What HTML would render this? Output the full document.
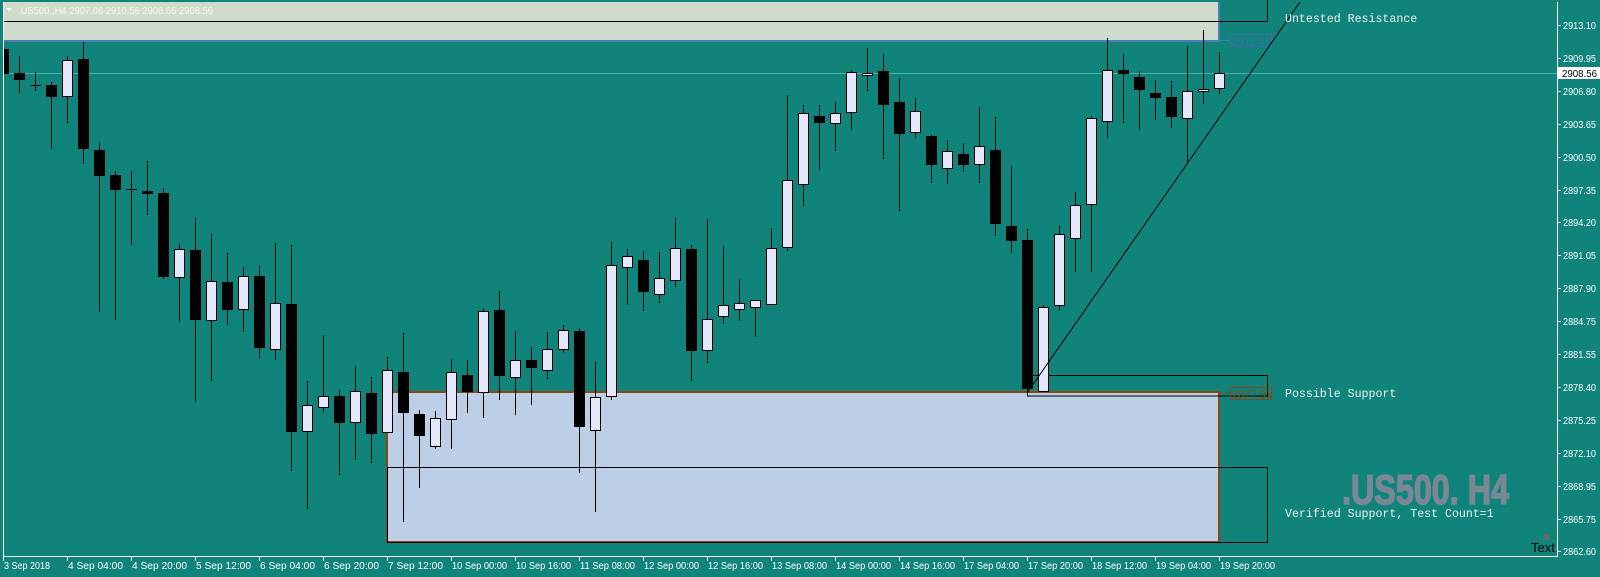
<!DOCTYPE html>
<html><head><meta charset="utf-8">
<style>
html,body{margin:0;padding:0;width:1600px;height:577px;overflow:hidden;background:#10837b;}
svg{position:absolute;left:0;top:0;}
.ax{font-family:"Liberation Sans","DejaVu Sans",sans-serif;font-size:10px;fill:#fff;}
.lbl{font-family:"Liberation Mono",monospace;font-size:11.6px;fill:#eef4ee;}
</style></head>
<body>
<svg id="s" width="1600" height="577" xmlns="http://www.w3.org/2000/svg" shape-rendering="crispEdges">
<defs><clipPath id="c"><rect x="3" y="2" width="1554" height="554"/></clipPath></defs>
<rect x="3" y="2" width="1216" height="38" fill="#d0dccb"/>
<rect x="3" y="40" width="1216" height="2" fill="#4a7fb5"/>
<rect x="1218" y="2" width="2" height="40" fill="#4a7fb5"/>
<line x1="3" y1="21.5" x2="1268" y2="21.5" stroke="#000"/>
<line x1="1267.5" y1="0" x2="1267.5" y2="21.5" stroke="#000"/>
<line x1="1219" y1="40.5" x2="1230" y2="40.5" stroke="#4a7fb5"/>
<rect x="1230.5" y="34.5" width="41" height="12" fill="none" stroke="#3f6fa8"/>
<text x="1232" y="45" font-family="Liberation Sans,sans-serif" font-size="11" fill="#3f6fa8">2911.61</text>
<path d="M6 8 L12 8 L9 11 Z" fill="#fff"/>
<text x="18" y="14" font-family="Liberation Sans,sans-serif" font-size="10" fill="#f6f6f6" textLength="195" lengthAdjust="spacingAndGlyphs">.US500.,H4  2907.06 2910.56 2906.66 2908.56</text>
<line x1="3" y1="73.5" x2="1557" y2="73.5" stroke="#4fb0a8"/>
<rect x="387" y="392" width="832" height="150" fill="#bccfe6" stroke="#8b4513" stroke-width="2"/>
<rect x="387.5" y="467.5" width="880" height="75" fill="none" stroke="#000"/>
<rect x="1027.5" y="375.5" width="240" height="20.5" fill="none" stroke="#000"/>
<line x1="1219" y1="393" x2="1230" y2="393" stroke="#8b4513"/>
<rect x="1230.5" y="387.5" width="41" height="12" fill="none" stroke="#8b4513"/>
<text x="1232" y="398" font-family="Liberation Sans,sans-serif" font-size="11" fill="#8b4513">2877.91</text>
<g id="cs" clip-path="url(#c)"></g>
<line x1="1027" y1="393" x2="1300" y2="2" stroke="#000" shape-rendering="auto"/>
<text class="lbl" x="1285" y="22">Untested Resistance</text>
<text class="lbl" x="1285" y="397">Possible Support</text>
<text class="lbl" x="1285" y="517">Verified Support, Test Count=1</text>
<text x="1342" y="504" font-family="Liberation Sans Narrow,Liberation Sans,sans-serif" font-weight="bold" font-size="42" fill="#7a8896" stroke="#7a8896" stroke-width="1.5" textLength="167" lengthAdjust="spacingAndGlyphs">.US500. H4</text>
<circle cx="1546" cy="537" r="3" fill="#6a6a6a"/>
<text x="1531" y="552" font-family="Liberation Sans,sans-serif" font-size="13" fill="#000">Text</text>
<line x1="3.5" y1="2" x2="3.5" y2="556" stroke="#fff"/>
<line x1="3" y1="556.5" x2="1558" y2="556.5" stroke="#fff"/>
<line x1="1557.5" y1="2" x2="1557.5" y2="557" stroke="#fff"/>
<g id="ax"></g>
<rect x="1558" y="67" width="42" height="12" fill="#fff"/>
<text x="1562" y="77" class="ax" style="fill:#000" textLength="35" lengthAdjust="spacingAndGlyphs">2908.56</text>
</svg>
<script>
var d=[
['b',100,137,207,268],['b',157,204,223,260],['d',202,239,239,255],['b',230,238,271,417],['w',157,168,271,343],
['b',118,165,416,458],['b',398,420,492,873],['b',479,490,531,895],['d',479,530,530,685],['d',451,536,539,601],
['b',526,540,775,780],['w',680,698,777,901],['b',610,700,895,1125],['w',655,788,898,1066],['b',708,790,867,909],
['w',748,773,867,929],['b',745,773,973,1001],['w',680,849,979,1007],['b',686,851,1209,1318],['w',1067,1134,1209,1424],
['w',938,1109,1141,1155],['b',1092,1109,1183,1329],['w',1025,1096,1183,1287],['b',1056,1100,1214,1295],['w',1000,1037,1211,1211],
['b',932,1042,1155,1461],['b',1148,1159,1220,1365],['w',1151,1170,1251,1256],['w',1005,1042,1175,1256],['b',1008,1050,1098,1155],
['w',862,872,1101,1169],['b',815,868,1052,1119],['w',927,1009,1059,1161],['b',972,1008,1029,1133],['w',930,978,1038,1060],
['w',910,925,979,987],['b',918,927,1195,1323],['w',1014,1112,1206,1433],['w',678,743,1112,1119],['w',697,718,751,853],
['b',703,728,817,870],['w',706,779,825,847],['w',610,695,788,803],['b',686,697,982,1066],['w',613,894,982,1015],
['w',689,855,888,906],['w',781,847,869,898],['w',840,841,861,943],['w',638,695,853,853],['w',266,505,695,702],
['w',294,317,517,576],['b',294,325,343,475],['w',286,315,346,422],['w',196,202,315,363],['w',134,203,209,254],
['b',151,199,293,444],['b',218,286,374,590],['w',274,312,373,385],['b',378,381,461,511],['w',392,424,474,514],
['b',400,432,461,481],['w',300,410,461,511],['b',328,420,626,660],['b',465,633,674,707],['b',641,672,1088,1088],
['w',855,860,1097,1097],['w',633,656,858,870],['w',538,575,670,761],['w',325,331,575,761],['w',106,197,342,385],
['b',151,197,206,343],['b',199,216,251,363],['b',224,260,273,335],['b',227,272,327,357],['w',129,256,334,457],
['w',84,250,256,290],['w',146,205,250,262]];
var g=document.getElementById('cs'),h='';
d.forEach(function(c,i){
 var x=3+16*i,k=2.8,wt=Math.round(c[1]/k),bt=Math.round(c[2]/k),bb=Math.round(c[3]/k),wb=Math.round(c[4]/k);
 h+='<line x1="'+(x+0.5)+'" y1="'+wt+'" x2="'+(x+0.5)+'" y2="'+wb+'" stroke="#000"/>';
 if(c[0]=='d'){h+='<rect x="'+(x-5)+'" y="'+bt+'" width="11" height="'+Math.max(1,bb-bt+1)+'" fill="#000"/>';}
 else if(c[0]=='b'){h+='<rect x="'+(x-5)+'" y="'+bt+'" width="11" height="'+Math.max(2,bb-bt)+'" fill="#000"/>';}
 else{h+='<rect x="'+(x-4.5)+'" y="'+(bt+0.5)+'" width="10" height="'+Math.max(2,bb-bt-1)+'" fill="#e6e6fa" stroke="#000"/>';}
});
g.innerHTML=h;
var a='',p=['2913.10','2909.95','2906.80','2903.65','2900.50','2897.35','2894.20','2891.05','2887.90','2884.75','2881.55','2878.40','2875.25','2872.10','2868.95','2865.75','2862.60'];
p.forEach(function(v,i){var y=Math.round(25+i*32.9);a+='<line x1="1557" y1="'+(y+0.5)+'" x2="1561" y2="'+(y+0.5)+'" stroke="#fff"/><text class="ax" x="1563" y="'+(y+4)+'" textLength="33" lengthAdjust="spacingAndGlyphs">'+v+'</text>';});
var t=['3 Sep 2018','4 Sep 04:00','4 Sep 20:00','5 Sep 12:00','6 Sep 04:00','6 Sep 20:00','7 Sep 12:00','10 Sep 00:00','10 Sep 16:00','11 Sep 08:00','12 Sep 00:00','12 Sep 16:00','13 Sep 08:00','14 Sep 00:00','14 Sep 16:00','17 Sep 04:00','17 Sep 20:00','18 Sep 12:00','19 Sep 04:00','19 Sep 20:00'];
t.forEach(function(v,i){var x=3+64*i;var w=v.length==10?(i==0?46:50):55;a+='<line x1="'+(x+0.5)+'" y1="556" x2="'+(x+0.5)+'" y2="561" stroke="#fff"/><text class="ax" x="'+(x+1)+'" y="569" textLength="'+w+'" lengthAdjust="spacingAndGlyphs">'+v+'</text>';});
document.getElementById('ax').innerHTML=a;
</script>
</body></html>
